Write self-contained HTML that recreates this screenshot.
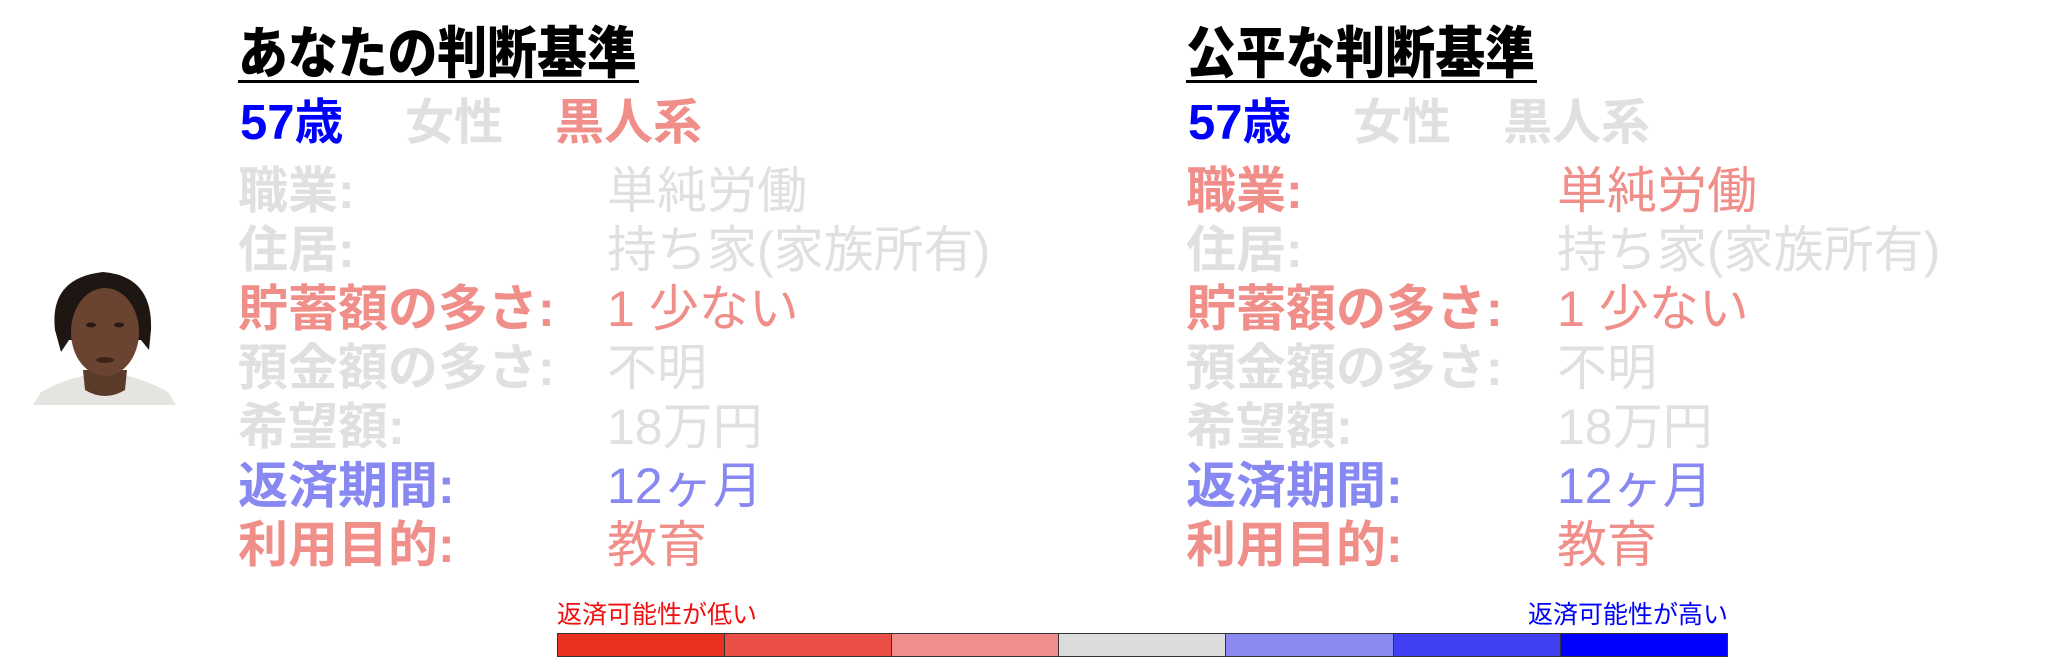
<!DOCTYPE html>
<html><head><meta charset="utf-8"><style>
body{margin:0;width:2048px;height:666px;background:#fff;position:relative;overflow:hidden;font-family:"Liberation Sans","Noto Sans CJK JP",sans-serif}
.t{position:absolute;white-space:nowrap;line-height:1}
.h{font-size:56px;font-weight:900;color:#000;transform:scaleX(0.89);transform-origin:left top}
.u{position:absolute;height:3px;background:#000}
.r2{font-size:49px;font-weight:700}
.l{font-size:50px;font-weight:700}
.v{font-size:50px;font-weight:400}
.g{color:#e0e0e0}.s{color:#f08e8a}.p{color:#8888f2}.b{color:#0000ff}
.seg{position:absolute;top:633px;height:24px;border:1px solid #333;box-sizing:border-box}
</style></head><body>
<div class="t h" style="left:238px;top:26px">あなたの判断基準</div>
<div class="u" style="left:238px;top:80px;width:401px"></div>
<div class="t h" style="left:1186px;top:26px">公平な判断基準</div>
<div class="u" style="left:1186px;top:80px;width:351px"></div>

<div class="t r2 b" style="left:240px;top:99px">57歳</div>
<div class="t r2 g" style="left:405px;top:99px">女性</div>
<div class="t r2 s" style="left:555px;top:99px">黒人系</div>
<div class="t r2 b" style="left:1188px;top:99px">57歳</div>
<div class="t r2 g" style="left:1353px;top:99px">女性</div>
<div class="t r2 g" style="left:1503px;top:99px">黒人系</div>

<div class="t l g" style="left:238px;top:166px">職業:</div><div class="t v g" style="left:607px;top:166px">単純労働</div>
<div class="t l g" style="left:238px;top:225px">住居:</div><div class="t v g" style="left:607px;top:225px">持ち家(家族所有)</div>
<div class="t l s" style="left:238px;top:284px">貯蓄額の多さ:</div><div class="t v s" style="left:607px;top:284px">1 少ない</div>
<div class="t l g" style="left:238px;top:343px">預金額の多さ:</div><div class="t v g" style="left:607px;top:343px">不明</div>
<div class="t l g" style="left:238px;top:402px">希望額:</div><div class="t v g" style="left:607px;top:402px">18万円</div>
<div class="t l p" style="left:238px;top:461px">返済期間:</div><div class="t v p" style="left:607px;top:461px">12ヶ月</div>
<div class="t l s" style="left:238px;top:520px">利用目的:</div><div class="t v s" style="left:607px;top:520px">教育</div>

<div class="t l s" style="left:1186px;top:166px">職業:</div><div class="t v s" style="left:1557px;top:166px">単純労働</div>
<div class="t l g" style="left:1186px;top:225px">住居:</div><div class="t v g" style="left:1557px;top:225px">持ち家(家族所有)</div>
<div class="t l s" style="left:1186px;top:284px">貯蓄額の多さ:</div><div class="t v s" style="left:1557px;top:284px">1 少ない</div>
<div class="t l g" style="left:1186px;top:343px">預金額の多さ:</div><div class="t v g" style="left:1557px;top:343px">不明</div>
<div class="t l g" style="left:1186px;top:402px">希望額:</div><div class="t v g" style="left:1557px;top:402px">18万円</div>
<div class="t l p" style="left:1186px;top:461px">返済期間:</div><div class="t v p" style="left:1557px;top:461px">12ヶ月</div>
<div class="t l s" style="left:1186px;top:520px">利用目的:</div><div class="t v s" style="left:1557px;top:520px">教育</div>

<svg style="position:absolute;left:33px;top:270px" width="143" height="135" viewBox="0 0 143 135">
<path d="M0 135 L8 122 Q30 110 50 106 L95 106 Q118 112 135 122 L143 135Z" fill="#e6e4e0"/>
<path d="M50 100 L52 120 Q72 132 92 120 L94 100Z" fill="#5a3a28"/>
<path d="M22 60 Q16 8 70 2 Q120 6 118 60 L116 80 L108 70 L36 70 L28 82Z" fill="#1e1612"/>
<ellipse cx="72" cy="62" rx="34" ry="44" fill="#6b4431"/>
<ellipse cx="58" cy="55" rx="5" ry="2.5" fill="#2a1a12"/><ellipse cx="86" cy="55" rx="5" ry="2.5" fill="#2a1a12"/>
<ellipse cx="72" cy="90" rx="9" ry="3" fill="#3e2418"/>
</svg>

<div class="t" style="left:557px;top:603px;font-size:25px;color:#f01010">返済可能性が低い</div>
<div class="t" style="left:1728px;top:603px;font-size:25px;color:#0000ff;transform:translateX(-100%)">返済可能性が高い</div>
<div class="seg" style="left:557px;width:168px;background:#e8311f"></div>
<div class="seg" style="left:724px;width:168px;background:#eb4f47"></div>
<div class="seg" style="left:891px;width:168px;background:#ef8e8a"></div>
<div class="seg" style="left:1058px;width:168px;background:#dcdcdc"></div>
<div class="seg" style="left:1225px;width:169px;background:#8a8af2"></div>
<div class="seg" style="left:1393px;width:168px;background:#4040f2"></div>
<div class="seg" style="left:1560px;width:168px;background:#0000ff"></div>
</body></html>
